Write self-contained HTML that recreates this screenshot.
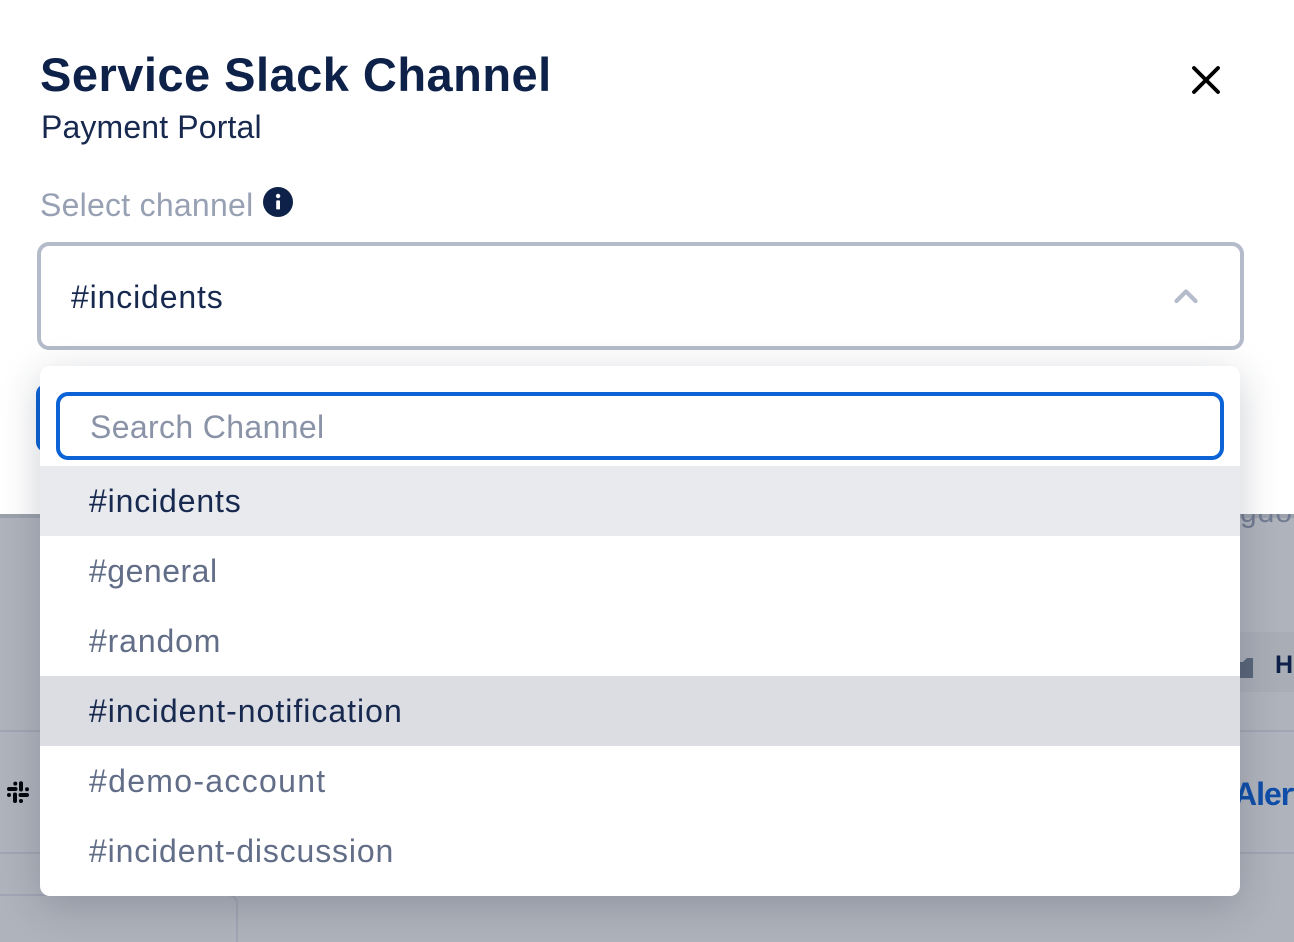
<!DOCTYPE html>
<html lang="en">
<head>
<meta charset="utf-8">
<title>Service Slack Channel</title>
<style>
html,body{margin:0;padding:0;background:#fff}
body{position:relative;width:1294px;height:942px;overflow:hidden;font-family:"Liberation Sans",sans-serif}
.a{position:absolute;white-space:nowrap}
.opt{position:absolute;left:0;width:1200px;height:70px;line-height:71px;padding-left:49px;box-sizing:border-box;font-size:32px;color:#626e88;white-space:nowrap}
</style>
</head>
<body>
<!-- dimmed page behind -->
<div class="a" style="left:0;top:514px;width:1294px;height:428px;background:#afb3bc;overflow:hidden">
  <div class="a" style="left:0;top:0;width:1294px;height:4px;background:#9ca1ac"></div>
  <div class="a" style="left:1240px;top:-18px;font-size:30px;letter-spacing:1px;color:#727c92">gdom</div>
  <div class="a" style="left:1200px;top:118px;width:94px;height:60px;background:#a9adb6"></div>
  <div class="a" style="left:0;top:216px;width:1294px;height:2px;background:#a0a6b4"></div>
  <div class="a" style="left:0;top:338px;width:1294px;height:2px;background:#a0a6b4"></div>
  <div class="a" style="left:0;top:380px;width:238px;height:60px;border:2px solid #a0a6b4;border-left:0;border-bottom:0;border-top-right-radius:10px;box-sizing:border-box"></div>
  <svg class="a" style="left:1230px;top:136px" width="26" height="28" viewBox="0 0 26 28"><path d="M0 12h13l4-4h6v20H0z" fill="#5a6579"/></svg>
  <div class="a" style="left:1275px;top:136px;font-size:25px;line-height:30px;font-weight:bold;color:#0e2249">Hi</div>
  <div class="a" style="left:1234px;top:261px;font-size:32px;line-height:38px;font-weight:bold;letter-spacing:-1px;color:#0f4ea8">Alert</div>
  <svg class="a" style="left:6px;top:266px" width="24" height="24" viewBox="0 0 24 24" fill="none" stroke="#05070d" stroke-width="4" stroke-linecap="round">
    <path d="M3 9H9.5M15 3.2V9.5M14.5 15H21M9 14.5V21"/>
    <circle cx="9.3" cy="3.6" r="2" fill="#05070d" stroke="none"/>
    <circle cx="21" cy="9.2" r="2" fill="#05070d" stroke="none"/>
    <circle cx="15" cy="21" r="2" fill="#05070d" stroke="none"/>
    <circle cx="3" cy="15" r="2" fill="#05070d" stroke="none"/>
  </svg>
</div>

<!-- modal -->
<div class="a" style="left:40px;top:47px;font-size:47px;line-height:56px;font-weight:bold;letter-spacing:.48px;color:#0e2249">Service Slack Channel</div>
<div class="a" style="left:41px;top:108px;font-size:32px;line-height:38px;letter-spacing:.14px;color:#17294f">Payment Portal</div>
<svg class="a" style="left:1190px;top:64px" width="32" height="32" viewBox="0 0 32 32"><path d="M4 4L28 28M28 4L4 28" stroke="#000" stroke-width="3.8" stroke-linecap="round"/></svg>

<div class="a" style="left:40px;top:186px;font-size:32px;line-height:38px;letter-spacing:.25px;color:#98a1b3">Select channel</div>
<svg class="a" style="left:263px;top:187px" width="30" height="30" viewBox="0 0 30 30"><circle cx="15" cy="15" r="15" fill="#0e2249"/><rect x="13.2" y="13.4" width="3.8" height="9" rx=".8" fill="#fff"/><circle cx="15.1" cy="9" r="2.2" fill="#fff"/></svg>

<div class="a" style="left:37px;top:242px;width:1207px;height:108px;box-sizing:border-box;border:4px solid #b4bbca;border-radius:12px;background:#fff"></div>
<div class="a" style="left:71px;top:278px;font-size:32px;line-height:38px;letter-spacing:.85px;color:#17294f">#incidents</div>
<svg class="a" style="left:1172px;top:286px" width="28" height="18" viewBox="0 0 28 18"><path d="M4.5 15L14 5.5L23.5 15" fill="none" stroke="#b4bbca" stroke-width="4.2" stroke-linecap="round" stroke-linejoin="round"/></svg>

<!-- button sliver behind dropdown -->
<div class="a" style="left:36px;top:384px;width:60px;height:68px;background:#0b63d6;border-radius:10px"></div>

<!-- dropdown -->
<div class="a" style="left:40px;top:366px;width:1200px;height:530px;background:#fff;border-radius:10px;box-shadow:0 10px 40px rgba(30,40,60,.22);overflow:hidden">
  <div class="a" style="left:16px;top:26px;width:1168px;height:68px;box-sizing:border-box;border:4px solid #0b63d6;border-radius:12px"></div>
  <div class="a" style="left:50px;top:42px;font-size:32px;line-height:38px;letter-spacing:.36px;color:#8a93a7">Search Channel</div>
  <div class="opt" style="top:100px;background:#e9eaee;color:#17294f;letter-spacing:.85px">#incidents</div>
  <div class="opt" style="top:170px;letter-spacing:.5px">#general</div>
  <div class="opt" style="top:240px;letter-spacing:.86px">#random</div>
  <div class="opt" style="top:310px;background:#dcdde2;color:#17294f;letter-spacing:1px">#incident-notification</div>
  <div class="opt" style="top:380px;letter-spacing:1.3px">#demo-account</div>
  <div class="opt" style="top:450px;letter-spacing:.85px">#incident-discussion</div>
</div>
</body>
</html>
